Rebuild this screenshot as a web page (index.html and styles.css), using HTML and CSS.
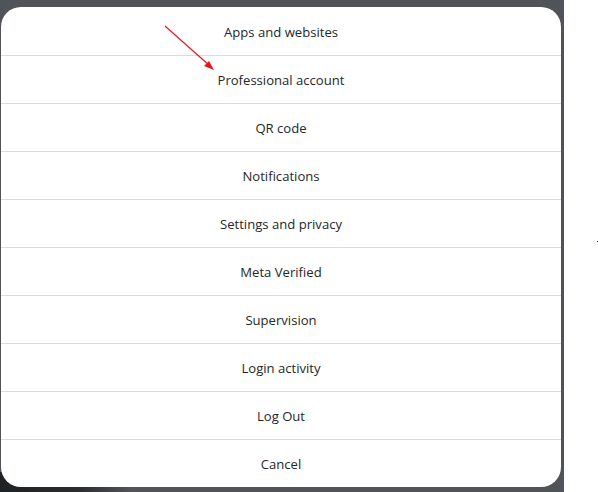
FILE: index.html
```html
<!DOCTYPE html>
<html>
<head>
<meta charset="utf-8">
<link rel="stylesheet" href="styles.css">
</head>
<body>
<div class="backdrop">
  <div class="noise"></div>
  <div class="sheet">
    <div class="item">Apps and websites</div>
    <div class="item">Professional account</div>
    <div class="item">QR code</div>
    <div class="item">Notifications</div>
    <div class="item">Settings and privacy</div>
    <div class="item">Meta Verified</div>
    <div class="item">Supervision</div>
    <div class="item">Login activity</div>
    <div class="item">Log Out</div>
    <div class="item">Cancel</div>
  </div>
</div>
<svg class="arrow" width="598" height="492" viewBox="0 0 598 492">
  <line x1="165" y1="26" x2="210" y2="66" stroke="#e8141c" stroke-width="1.1"/>
  <polygon points="214,70 204,66 209,61" fill="#e8141c"/>
</svg>
<div class="dot"></div>
</body>
</html>
```
FILE: styles.css
```css
html, body {
  margin: 0;
  padding: 0;
  background: #ffffff;
  width: 598px;
  height: 492px;
  overflow: hidden;
}
.backdrop {
  position: relative;
  width: 564px;
  height: 492px;
  background: #505357;
  padding-top: 7px;
  box-sizing: border-box;
}
.noise {
  position: absolute;
  left: 0;
  bottom: 0;
  width: 130px;
  height: 20px;
  background: linear-gradient(90deg, #1f2225 0%, #2a2d30 60%, rgba(80,83,87,0) 100%);
}
.sheet {
  position: relative;
  margin-left: 1px;
  width: 560px;
  background: #ffffff;
  border-radius: 20px;
  overflow: hidden;
  display: flex;
  flex-direction: column;
}
.item {
  height: 48px;
  display: flex;
  align-items: center;
  justify-content: center;
  padding-top: 1px;
  font-family: "Open Sans", "Noto Sans", sans-serif;
  font-size: 13.1px;
  color: #262626;
  border-top: 1px solid #dbdbdb;
  box-sizing: border-box;
}
.item:first-child {
  border-top: none;
}
.arrow {
  position: absolute;
  left: 0;
  top: 0;
  pointer-events: none;
}
.dot {
  position: absolute;
  left: 597px;
  top: 241px;
  width: 1px;
  height: 1px;
  background: #1a2a8a;
}
```
